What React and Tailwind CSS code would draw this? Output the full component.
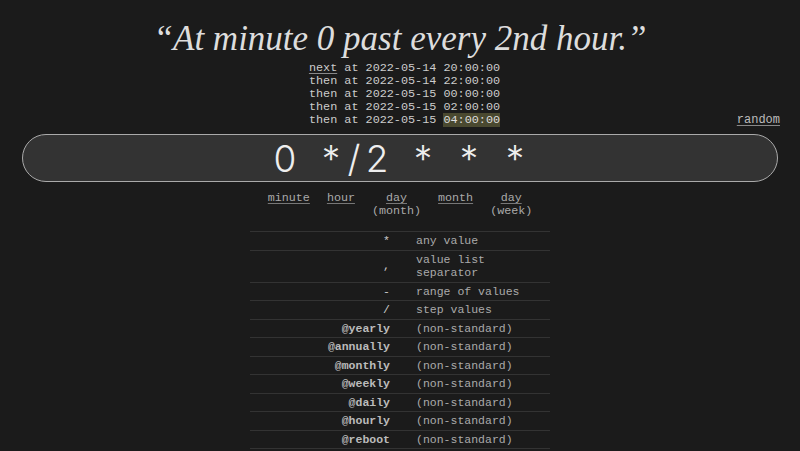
import React from 'react';

const upcoming = [
  { label: 'next', date: '2022-05-14', time: '20:00:00' },
  { label: 'then', date: '2022-05-14', time: '22:00:00' },
  { label: 'then', date: '2022-05-15', time: '00:00:00' },
  { label: 'then', date: '2022-05-15', time: '02:00:00' },
  { label: 'then', date: '2022-05-15', time: '04:00:00' },
];

const parts = [
  { top: 'minute' },
  { top: 'hour' },
  { top: 'day', sub: '(month)' },
  { top: 'month' },
  { top: 'day', sub: '(week)' },
];

const legend = [
  { key: '*', desc: 'any value' },
  { key: ',', desc: 'value list separator' },
  { key: '-', desc: 'range of values' },
  { key: '/', desc: 'step values' },
  { key: '@yearly', desc: '(non-standard)', bold: true },
  { key: '@annually', desc: '(non-standard)', bold: true },
  { key: '@monthly', desc: '(non-standard)', bold: true },
  { key: '@weekly', desc: '(non-standard)', bold: true },
  { key: '@daily', desc: '(non-standard)', bold: true },
  { key: '@hourly', desc: '(non-standard)', bold: true },
  { key: '@reboot', desc: '(non-standard)', bold: true },
];

const expression = '0 */2 * * *';

const App = () => {
  return (
    <div className="min-h-screen bg-[#1b1b1b] text-[#ccc] font-['Liberation_Mono',monospace] overflow-hidden">
      <h1 className="pt-[17px] text-center font-['Liberation_Serif',serif] italic text-[35px] leading-[44px] text-[#ddd]">
        “At minute 0 past every 2nd hour.”
      </h1>

      <div className="grid grid-cols-[1fr_auto_1fr] px-5 mt-[1px]">
        <div />
        <div className="pl-[9px] text-[11.8px] leading-[13px]">
          {upcoming.map((row, i) => (
            <div key={i} className="whitespace-pre">
              {row.label === 'next' ? (
                <a className="underline decoration-[#888] underline-offset-2">next</a>
              ) : (
                'then'
              )}
              {' at ' + row.date + ' '}
              <span className={i === upcoming.length - 1 ? 'bg-[#4a4930] text-[#ddd]' : ''}>{row.time}</span>
            </div>
          ))}
        </div>
        <div className="self-end text-right text-[12px] leading-[13px]">
          <a className="underline decoration-[#888] underline-offset-2 text-[#bbb]">random</a>
        </div>
      </div>

      <div className="mx-[22px] mt-[7px] h-[48px] rounded-full border border-[#aaa] bg-[#333] flex items-center justify-center">
        <div className="flex font-['Inter',sans-serif] font-light text-[37px] leading-none text-[#eee]">
          {expression.split('').map((ch, i) => (
            <span key={i} className="inline-block w-[23px] text-center whitespace-pre">
              {ch}
            </span>
          ))}
        </div>
      </div>

      <div className="mt-[10px] flex justify-center gap-[17px] text-[11.7px] leading-[13px] text-[#aaa]">
        {parts.map((p, i) => (
          <div key={i} className="text-center">
            <div className="underline decoration-[#777] underline-offset-2">{p.top}</div>
            {p.sub && <div>{p.sub}</div>}
          </div>
        ))}
      </div>

      <table className="mx-auto mt-[13px] w-[300px] border-collapse text-[11.5px] leading-[13.5px]">
        <tbody>
          {legend.map((row, i) => (
            <tr key={i} className="border-t border-b border-[#333]">
              <td className={`w-[152px] pr-[12px] py-[2px] text-right align-middle ${row.bold ? 'font-bold text-[#bbb]' : 'text-[#ccc]'}`}>
                {row.key}
              </td>
              <td className="pl-[14px] pr-[6px] py-[2px] text-[#aaa] align-middle">{row.desc}</td>
            </tr>
          ))}
        </tbody>
      </table>
    </div>
  );
};

export default App;
